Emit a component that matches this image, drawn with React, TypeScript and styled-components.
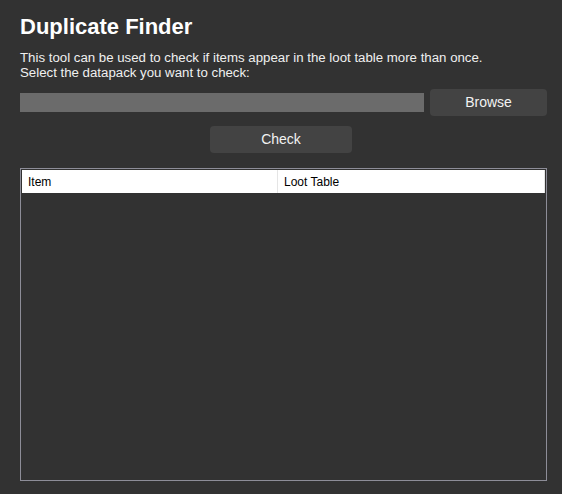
import React from "react";
import styled, { createGlobalStyle } from "styled-components";

const Global = createGlobalStyle`
  html, body { margin: 0; padding: 0; background: #323232; }
  body { font-family: "Liberation Sans", Arial, sans-serif; color: #f2f2f2; }
  * { box-sizing: border-box; }
`;

const Page = styled.div`
  width: 562px;
  height: 494px;
  padding: 14px 15px 13px 20px;
  display: flex;
  flex-direction: column;
`;

const Title = styled.h1`
  margin: 0;
  font-size: 22px;
  line-height: 26px;
  font-weight: bold;
  color: #ffffff;
`;

const Description = styled.p`
  margin: 10px 0 0;
  font-size: 13.25px;
  line-height: 15px;
  color: #f0f0f0;
`;

const PathRow = styled.div`
  margin-top: 9px;
  display: flex;
  align-items: center;
  gap: 6px;
`;

const PathBox = styled.div`
  flex: 1;
  height: 19px;
  background: #6b6b6b;
`;

const Button = styled.button<{ $width: number }>`
  width: ${(p) => p.$width}px;
  height: 27px;
  border: none;
  border-radius: 4px;
  background: #434343;
  color: #f2f2f2;
  font-family: "Liberation Sans", Arial, sans-serif;
  font-size: 14px;
  padding: 0 0 1px;
`;

const CheckRow = styled.div`
  margin-top: 10px;
  padding-right: 5px;
  display: flex;
  justify-content: center;
`;

const Table = styled.div`
  margin-top: 15px;
  flex: 1;
  border: 1px solid #8d8d98;
  padding: 1px;
  display: flex;
  flex-direction: column;
`;

const HeaderRow = styled.div`
  display: grid;
  grid-template-columns: 256px 1fr;
  height: 23px;
  background: #ffffff;
`;

const HeaderCell = styled.div`
  display: flex;
  align-items: center;
  padding-left: 6px;
  font-size: 12px;
  color: #000000;
  border-right: 1px solid #e5e5e5;
`;

export default function App() {
  return (
    <>
      <Global />
      <Page>
        <Title>Duplicate Finder</Title>
        <Description>
          This tool can be used to check if items appear in the loot table more than once.
          <br />
          Select the datapack you want to check:
        </Description>
        <PathRow>
          <PathBox />
          <Button $width={117}>Browse</Button>
        </PathRow>
        <CheckRow>
          <Button $width={142}>Check</Button>
        </CheckRow>
        <Table>
          <HeaderRow>
            <HeaderCell>Item</HeaderCell>
            <HeaderCell>Loot Table</HeaderCell>
          </HeaderRow>
        </Table>
      </Page>
    </>
  );
}
